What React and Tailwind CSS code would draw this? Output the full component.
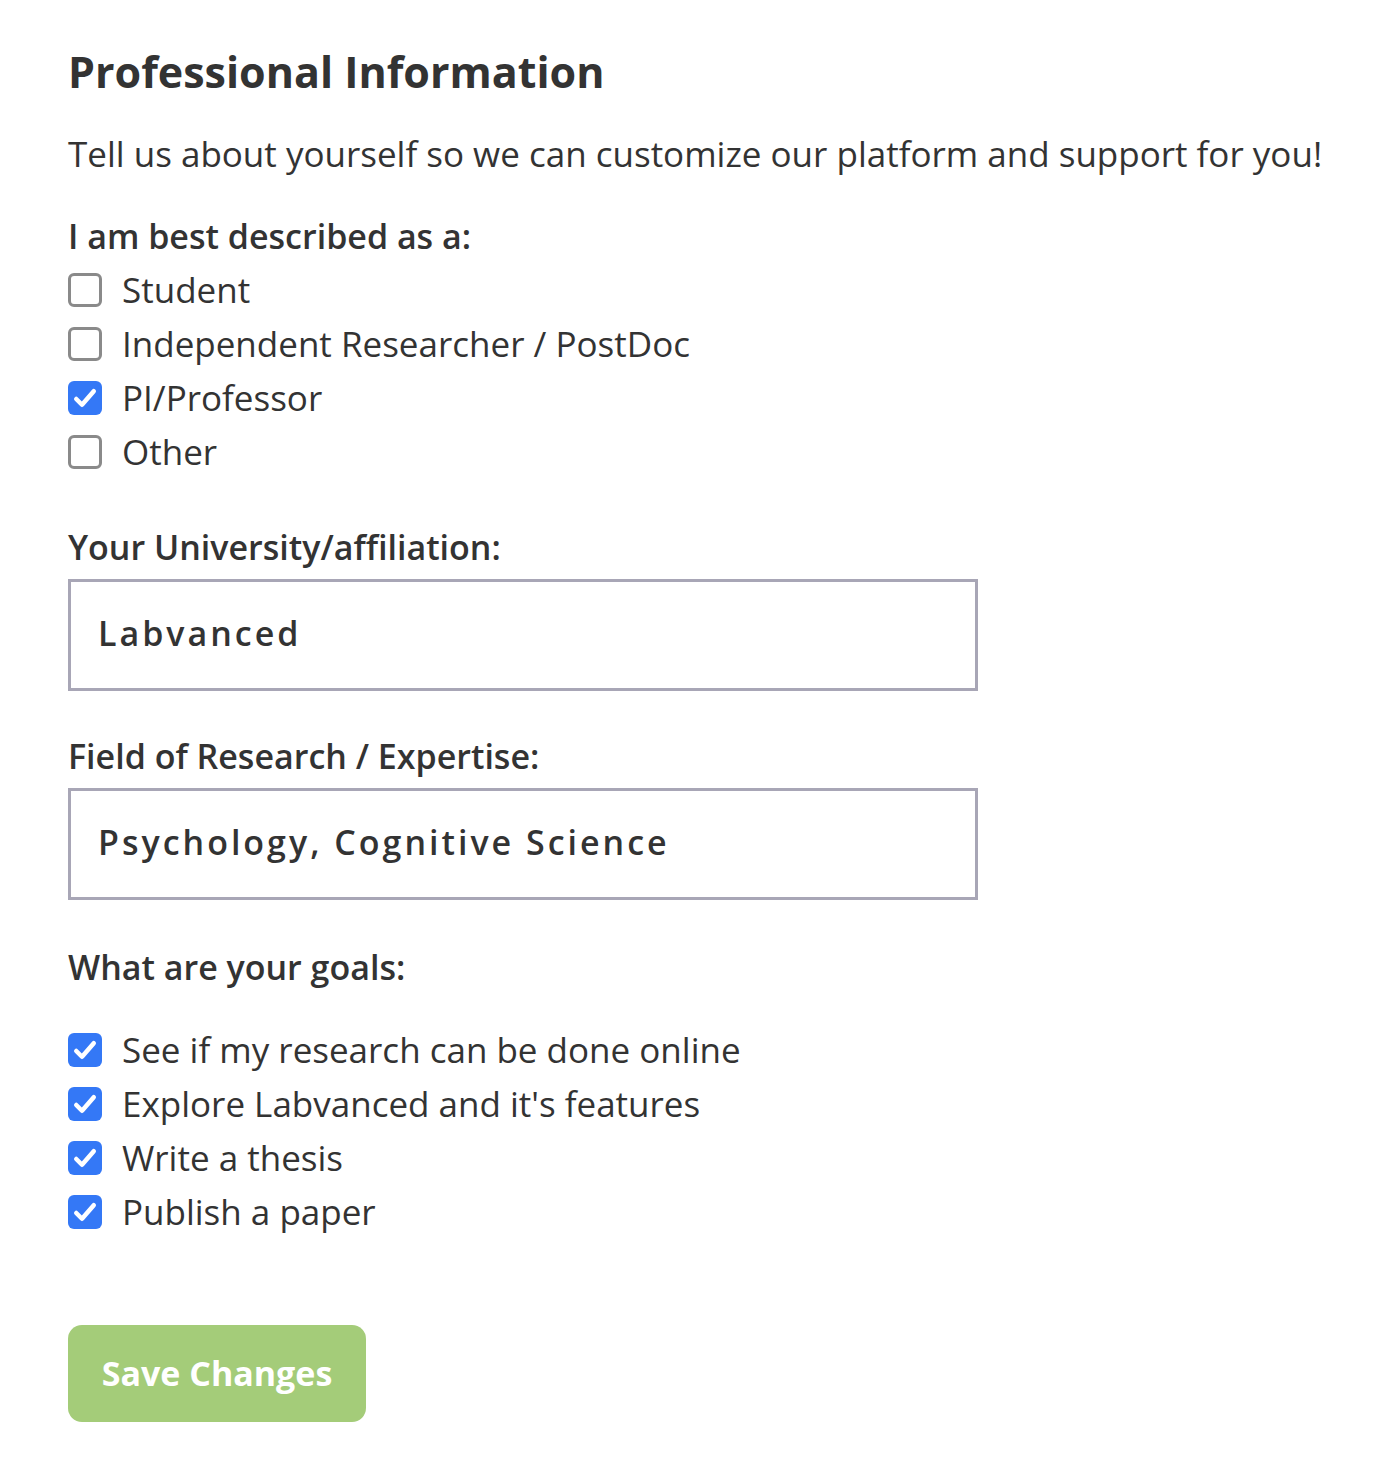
import React, { useState } from 'react';

const Check = ({ checked, onChange }) => (
    <button
        type="button"
        onClick={onChange}
        className={
            checked
                ? 'w-[34px] h-[34px] shrink-0 rounded-[6px] bg-[#3478f6] flex items-center justify-center'
                : 'w-[34px] h-[34px] shrink-0 rounded-[6px] border-[3px] border-[#8a8a8a] bg-white'
        }
    >
        {checked && (
            <svg viewBox="0 0 24 24" className="w-[30px] h-[30px]" fill="none" stroke="white" strokeWidth="3.6" strokeLinecap="round" strokeLinejoin="round">
                <path d="M5 12.8l4.6 4.6L19 6.6" />
            </svg>
        )}
    </button>
);

const CheckRow = ({ label, checked, onChange }) => (
    <label className="flex items-center gap-[20px] h-[54px] cursor-pointer">
        <Check checked={checked} onChange={onChange} />
        <span className="text-[35px] text-[#333]">{label}</span>
    </label>
);

export default function App() {
    const [roles, setRoles] = useState({ Student: false, 'Independent Researcher / PostDoc': false, 'PI/Professor': true, Other: false });
    const [goals, setGoals] = useState({
        'See if my research can be done online': true,
        "Explore Labvanced and it's features": true,
        'Write a thesis': true,
        'Publish a paper': true,
    });

    return (
        <div className="min-h-screen bg-white text-[#333] pl-[68px] pr-[20px] pt-[40px]" style={{ fontFamily: '"Open Sans", "Noto Sans", sans-serif' }}>
            <h1 className="text-[43px] font-bold leading-[64px] text-[#333]">Professional Information</h1>

            <p className="mt-[27px] text-[35px] leading-[46px] whitespace-nowrap">Tell us about yourself so we can customize our platform and support for you!</p>

            {/* ROLE */}
            <div className="mt-[37px] text-[34px] font-semibold leading-[44px]">I am best described as a:</div>
            <div className="mt-[5px] flex flex-col">
                {Object.keys(roles).map((k) => (
                    <CheckRow key={k} label={k} checked={roles[k]} onChange={() => setRoles({ ...roles, [k]: !roles[k] })} />
                ))}
            </div>

            {/* AFFILIATION */}
            <div className="mt-[46px] text-[34px] font-semibold leading-[44px]">Your University/affiliation:</div>
            <input
                defaultValue="Labvanced"
                className="mt-[10px] block w-[910px] h-[112px] border-[3px] border-[#a8a6b6] px-[27px] pb-[4px] text-[34px] font-semibold tracking-[3px] text-[#333] outline-none"
            />

            <div className="mt-[43px] text-[34px] font-semibold leading-[44px]">Field of Research / Expertise:</div>
            <input
                defaultValue="Psychology, Cognitive Science"
                className="mt-[10px] block w-[910px] h-[112px] border-[3px] border-[#a8a6b6] px-[27px] pb-[4px] text-[34px] font-semibold tracking-[3px] text-[#333] outline-none"
            />

            {/* GOALS */}
            <div className="mt-[45px] text-[34px] font-semibold leading-[44px]">What are your goals:</div>
            <div className="mt-[34px] flex flex-col">
                {Object.keys(goals).map((k) => (
                    <CheckRow key={k} label={k} checked={goals[k]} onChange={() => setGoals({ ...goals, [k]: !goals[k] })} />
                ))}
            </div>

            <button
                type="button"
                className="mt-[86px] w-[298px] h-[97px] rounded-[14px] bg-[#a4cc79] text-white text-[34px] font-bold"
            >
                Save Changes
            </button>
        </div>
    );
}
